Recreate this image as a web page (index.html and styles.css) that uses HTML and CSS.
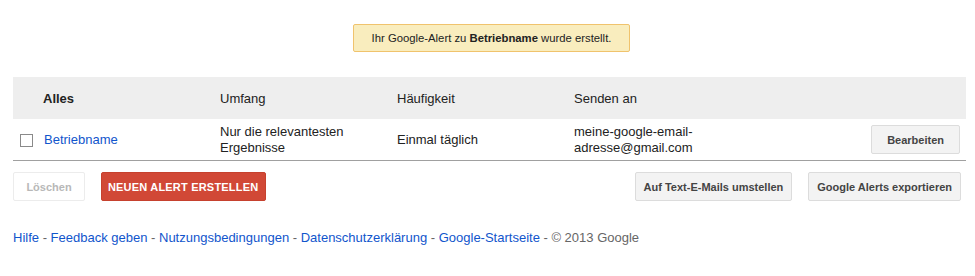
FILE: index.html
```html
<!DOCTYPE html>
<html>
<head>
  <title>Google Alerts</title>
  <link rel="stylesheet" href="styles.css">
</head>
<body>
  <div class="page">
    <div class="notice-wrap">
      <div class="notice">Ihr Google-Alert zu <b>Betriebname</b> wurde erstellt.</div>
    </div>

    <div class="alerts">
      <div class="alerts-row alerts-head">
        <div class="cell cell-name"><span class="all">Alles</span></div>
        <div class="cell">Umfang</div>
        <div class="cell">Häufigkeit</div>
        <div class="cell">Senden an</div>
        <div class="cell"></div>
      </div>
      <div class="alerts-row alerts-item">
        <div class="cell cell-name">
          <span class="checkbox"></span>
          <a href="#" class="link">Betriebname</a>
        </div>
        <div class="cell">Nur die relevantesten<br>Ergebnisse</div>
        <div class="cell">Einmal täglich</div>
        <div class="cell">meine-google-email-<br>adresse@gmail.com</div>
        <div class="cell cell-action"><button class="btn btn-edit">Bearbeiten</button></div>
      </div>
    </div>

    <div class="actions">
      <div class="actions-left">
        <button class="btn btn-disabled">Löschen</button>
        <button class="btn btn-red">NEUEN ALERT ERSTELLEN</button>
      </div>
      <div class="actions-right">
        <button class="btn">Auf Text-E-Mails umstellen</button>
        <button class="btn">Google Alerts exportieren</button>
      </div>
    </div>

    <div class="footer">
      <a href="#" class="link">Hilfe</a> -
      <a href="#" class="link">Feedback geben</a> -
      <a href="#" class="link">Nutzungsbedingungen</a> -
      <a href="#" class="link">Datenschutzerklärung</a> -
      <a href="#" class="link">Google-Startseite</a> - © 2013 Google
    </div>
  </div>
</body>
</html>
```

FILE: styles.css
```css
body {
  margin: 0;
  padding: 0;
  background: #fff;
  font-family: "Liberation Sans", Arial, sans-serif;
  font-size: 13px;
  color: #222;
}

.page {
  padding: 24px 9px 0 13px;
}

.notice-wrap {
  display: flex;
  justify-content: center;
  padding-left: 4px;
}

.notice {
  width: 275px;
  height: 26px;
  line-height: 26px;
  background-color: #f9edbe;
  border: 1px solid #f0c36d;
  border-radius: 2px;
  font-size: 11.3px;
  color: #222;
  text-align: center;
}

.alerts {
  margin-top: 25px;
}

.alerts-row {
  display: grid;
  grid-template-columns: 207px 177px 177px 1fr auto;
  align-items: center;
}

.alerts-head {
  height: 42px;
  background-color: #eee;
}

.alerts-item {
  height: 41px;
  border-bottom: 1px solid #a0a0a0;
}

.cell {
  line-height: 16px;
}

.alerts-head .cell {
  padding-top: 1px;
}

.cell-name {
  display: flex;
  align-items: center;
}

.all {
  padding-left: 30px;
  font-weight: bold;
}

.checkbox {
  display: inline-block;
  width: 11px;
  height: 11px;
  margin: 1px 11px 0 7px;
  border: 1px solid #8a8a8a;
  background: #fff;
}

.link {
  color: #15c;
  text-decoration: none;
}

.cell-action {
  padding-right: 6px;
}

.btn {
  height: 29px;
  padding: 0 8px;
  font-family: "Liberation Sans", Arial, sans-serif;
  font-size: 11px;
  font-weight: bold;
  color: #444;
  white-space: nowrap;
  background-color: #f3f3f3;
  border: 1px solid #dcdcdc;
  border-radius: 2px;
  cursor: pointer;
}

.btn-edit {
  padding: 0 15px;
}

.btn-disabled {
  width: 72px;
  color: #b8b8b8;
  background-color: #fff;
  border-color: #ececec;
}

.btn-red {
  width: 165px;
  margin-left: 12px;
  padding: 0;
  color: #fff;
  background-color: #d14836;
  border-color: #c6412e;
  letter-spacing: 0.2px;
}

.actions {
  display: flex;
  justify-content: space-between;
  margin-top: 11px;
  padding-right: 5px;
}

.actions-right {
  display: flex;
  gap: 16px;
}

.footer {
  margin-top: 29px;
  color: #666;
}
```
